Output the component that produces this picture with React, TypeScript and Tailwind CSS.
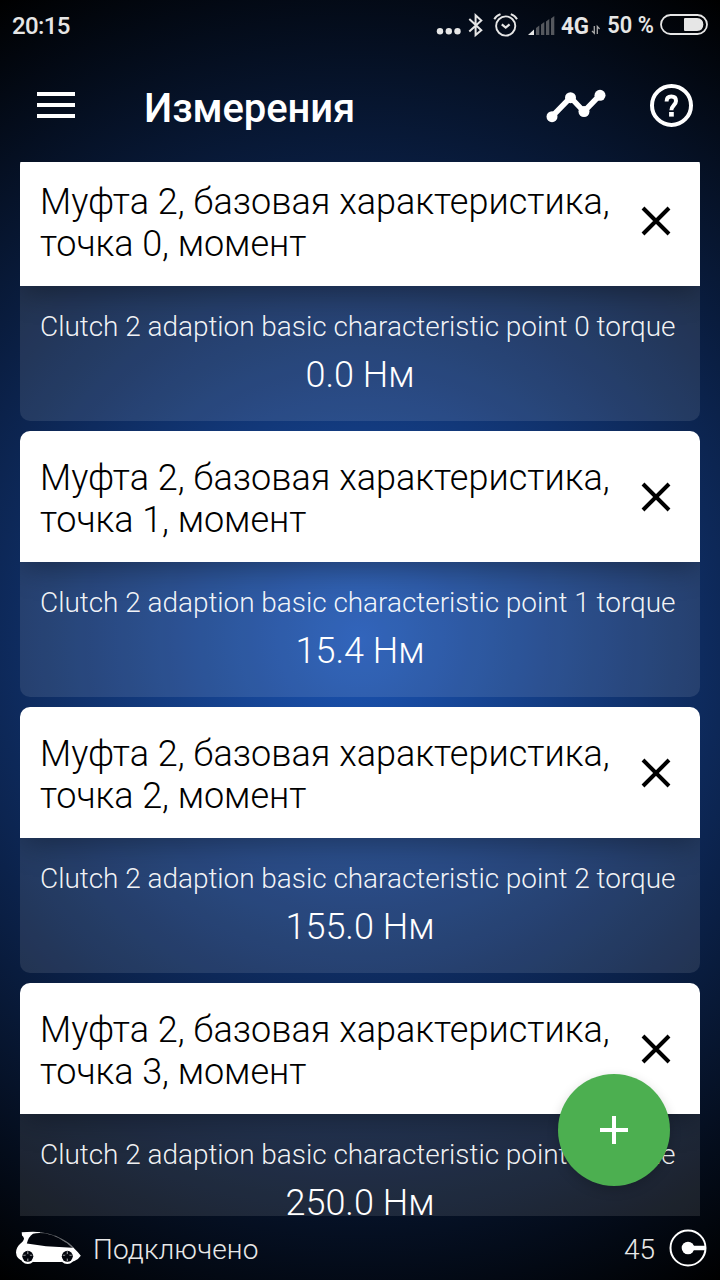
import React from 'react';

const measurements = [
  { id: 0, value: '0.0' },
  { id: 1, value: '15.4' },
  { id: 2, value: '155.0' },
  { id: 3, value: '250.0' },
];

function StatusBar() {
  return (
    <div className="flex h-[50px] shrink-0 items-center justify-between pl-3 pr-3 text-[#e6e6e6]">
      <span className="text-[24px] leading-[28px] font-medium tracking-[-0.6px] mt-[2px]">20:15</span>
      <svg width="275" height="50" viewBox="433 0 275 50" className="shrink-0" fill="none">
        <g fill="#e6e6e6">
          <circle cx="440" cy="31.3" r="3.2" />
          <circle cx="448.8" cy="31.3" r="3.2" />
          <circle cx="457.5" cy="31.3" r="3.2" />
        </g>
        <path d="M469.3 19L481.3 30.2L475.6 35V15.2L481.3 20.5L469.3 31.5" stroke="#e6e6e6" strokeWidth="2" />
        <g stroke="#e6e6e6" strokeWidth="1.9">
          <circle cx="505.7" cy="26" r="9.6" />
          <path d="M501.8 24.3L505.7 27.5L509.6 24.3" strokeWidth="2.2" />
          <path d="M494.3 19.3Q496 16 500.5 14.2M517 19.3Q515.3 16 510.8 14.2" />
        </g>
        <path d="M528 35L534 29.5V35Z" fill="#e6e6e6" />
        <path d="M536 28L539.3 25.5V35H536ZM541 24.5L544.3 22V35H541ZM546 21.5L549.3 19V35H546ZM551 18.5L554.3 16V35H551Z" fill="#55585e" />
        <text x="561" y="34" fontSize="23.5" fontWeight="700" fill="#e6e6e6" textLength="28" lengthAdjust="spacingAndGlyphs">4G</text>
        <path d="M594.3 26V33.3L592 31M597.3 34V26.5L599.6 29" stroke="#aaa" strokeWidth="1.3" />
        <text x="607.3" y="33.2" fontSize="23.5" fontWeight="600" fill="#e6e6e6" textLength="46.5" lengthAdjust="spacingAndGlyphs">50 %</text>
        <rect x="661" y="15" width="46" height="19" rx="9.5" stroke="#e6e6e6" strokeWidth="1.8" />
        <path d="M685 18H697Q703.3 18.5 703.3 24.5Q703.3 30.5 697 31H685Q684 31 684 30V19Q684 18 685 18Z" fill="#e6e6e6" />
      </svg>
    </div>
  );
}

function Header() {
  return (
    <header className="flex h-[112px] shrink-0 items-start text-white">
      <button aria-label="Меню" className="ml-[37px] mt-[42px] flex w-[38px] flex-col gap-[7px]">
        <span className="h-1 w-full bg-white" />
        <span className="h-1 w-full bg-white" />
        <span className="h-1 w-full bg-white" />
      </button>
      <h1 className="ml-[69px] mt-[35px] flex-1 text-[40px] leading-[48px] font-medium tracking-[-0.1px]">Измерения</h1>
      <svg width="60" height="36" viewBox="546 88 60 36" className="mt-[38px]">
        <path d="M552 116.5L570.5 97.5L584 111.5L600 95" fill="none" stroke="white" strokeWidth="5.4" />
        <g fill="white">
          <circle cx="552" cy="116.7" r="5.5" />
          <circle cx="570.5" cy="97.7" r="5.5" />
          <circle cx="584" cy="111.5" r="5.5" />
          <circle cx="600" cy="95.3" r="5.5" />
        </g>
      </svg>
      <svg width="44" height="44" viewBox="649 83 44 44" className="ml-[43px] mr-[27px] mt-[33px]" fill="none" stroke="white">
        <circle cx="671.5" cy="105.4" r="19.5" strokeWidth="4" />
        <path d="M666.6 101.4C666.6 98 668.4 96.6 671.3 96.6C674.3 96.6 676 98.3 676 101C676 104.8 671.4 105.6 671.4 110.3" strokeWidth="4" />
        <rect x="669.1" y="112" width="4.7" height="4.6" fill="white" stroke="none" />
      </svg>
    </header>
  );
}

function Card({ id, value }: { id: number; value: string }) {
  return (
    <section className="h-[266px] shrink-0 overflow-hidden rounded-[10px]">
      <div className="relative flex h-[131px] items-start justify-between bg-white pl-5 pr-[29px] pt-[26px] text-black shadow-[0_8px_28px_-3px_rgba(0,0,0,0.36)]">
        <h2 className="text-[36px] leading-[42px] font-light">
          <span className="tracking-[0.03px]">Муфта 2, базовая характеристика,</span>
          <br />
          <span className="tracking-[-0.05px]">точка {id}, момент</span>
        </h2>
        <svg width="30" height="30" viewBox="0 0 30 30" className="mt-[25px] shrink-0" stroke="black" strokeWidth="4">
          <path d="M2 2L28 28M28 2L2 28" />
        </svg>
      </div>
      <div className="h-[135px] bg-white/10 pt-[24px] text-white">
        <p className="whitespace-nowrap pl-5 text-[28px] leading-[33px] font-light tracking-[-0.045px] text-white/95">
          Clutch 2 adaption basic characteristic point {id} torque
        </p>
        <p className="mt-[11px] text-center text-[36px] leading-[42px] font-light">{value} Нм</p>
      </div>
    </section>
  );
}

function CarIcon() {
  return (
    <svg width="66" height="34" viewBox="15 1231 66 34">
      <path
        d="M21.7 1232.3L33 1231.8Q50 1232 62 1239Q70 1243 74 1248.3Q78 1252 80.8 1255.8Q79 1259 74 1261.3L60 1262H34L24 1261Q16.3 1259.5 16 1252.5Q16.3 1247 20 1244Q23.8 1241 24 1238.5Q23.5 1236.5 22 1235.5Z"
        fill="white"
      />
      <path d="M26.8 1243.5Q28.5 1236.5 33 1233.7Q37 1232.4 45 1233.2Q60 1236 72.3 1247.8L46 1246.3Z" fill="#02050c" />
      <path d="M40 1232.2Q58 1233.5 73 1247.5" fill="none" stroke="#02050c" strokeOpacity="0.55" strokeWidth="1.4" />
      {[27.8, 67.3].map((x) => (
        <g key={x}>
          <circle cx={x} cy="1256.3" r="7.6" fill="white" />
          <circle cx={x} cy="1256.3" r="5.5" fill="#02050c" />
          <path d={`M${x - 4.5} 1255.3H${x + 4.5}M${x} 1251.3V1261`} stroke="white" strokeOpacity="0.6" strokeWidth="1.1" />
          <circle cx={x} cy="1256.3" r="2.4" fill="#02050c" />
        </g>
      ))}
    </svg>
  );
}

export default function App() {
  return (
    <div className="relative flex h-[1280px] w-[720px] flex-col overflow-hidden bg-[radial-gradient(circle_at_50%_50%,#1b54b4_0%,#0d2858_50%,#000000_100%)] font-['Roboto',sans-serif]">
      <StatusBar />
      <Header />
      <main className="flex h-[1054px] shrink-0 flex-col justify-start overflow-hidden rounded-t-[2px] px-5">
        <div className="-mt-[7px] flex flex-col gap-[10px]">
          {measurements.map((m) => (
            <Card key={m.id} id={m.id} value={m.value} />
          ))}
        </div>
      </main>
      <footer className="flex h-16 shrink-0 items-center pl-[15px] pr-[13px] text-[28px] leading-[33px] font-light text-[#e8e8e8]">
        <CarIcon />
        <span className="ml-3 mt-[3px] tracking-[0.1px]">Подключено</span>
        <span className="ml-auto mt-[3px]">45</span>
        <svg width="38" height="38" viewBox="0 0 38 38" className="ml-[14px]" fill="none" stroke="white">
          <circle cx="19" cy="19" r="17.5" strokeWidth="2" />
          <circle cx="19" cy="19" r="6.3" fill="white" stroke="none" />
          <path d="M19 19H36" strokeWidth="4.5" />
        </svg>
      </footer>
      <button
        aria-label="Добавить"
        className="absolute left-[558px] top-[1074px] flex h-28 w-28 items-center justify-center rounded-full bg-[#4caf50] shadow-[0_4px_12px_rgba(0,0,0,0.18)]"
      >
        <svg width="28" height="28" viewBox="0 0 28 28" stroke="white" strokeWidth="4">
          <path d="M0 14H28M14 0V28" />
        </svg>
      </button>
    </div>
  );
}
